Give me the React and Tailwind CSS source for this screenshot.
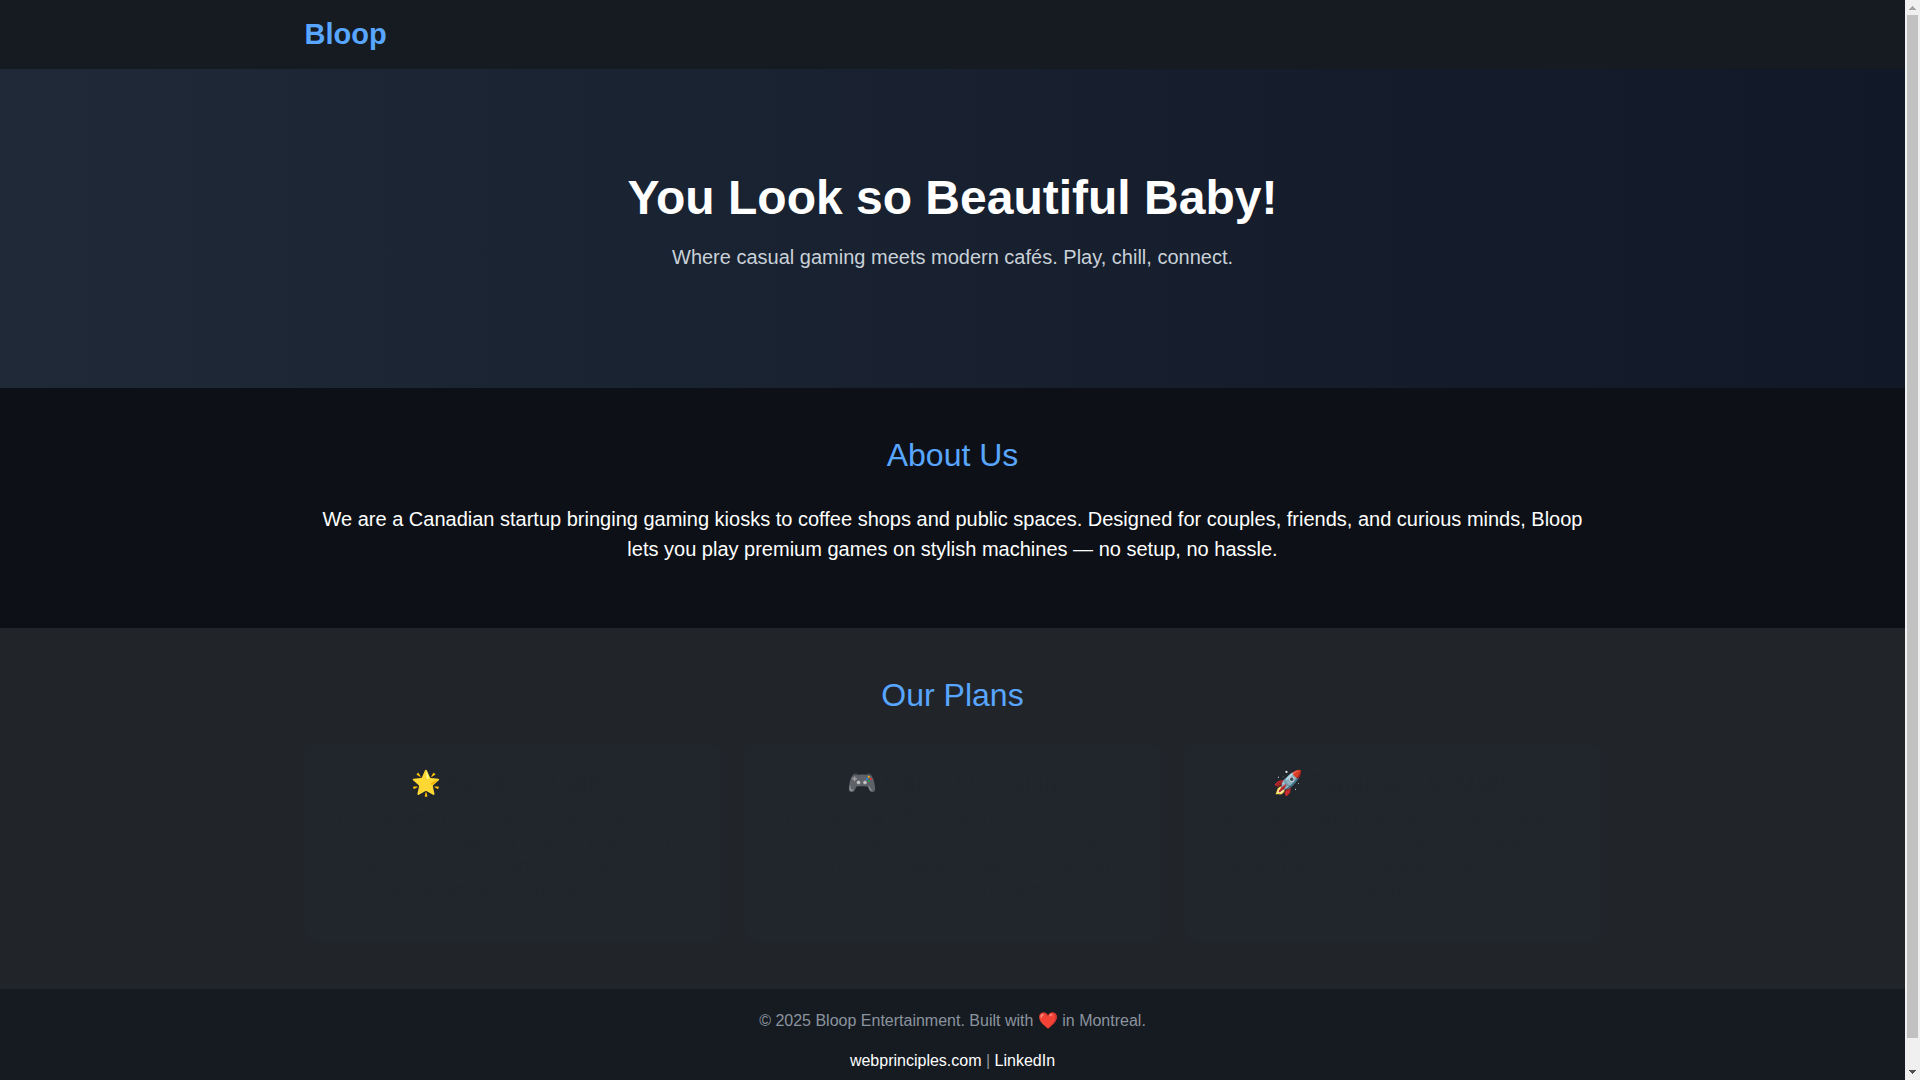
const plans = [
  {
    title: '🌟 Kiosks in Cafés',
    body: "We're partnering with local cafés across Montreal to place premium gaming kiosks — powered by PlayStation, Nintendo, and PC — that you can activate with just a tap of your card.",
  },
  {
    title: '🎮 Game Licensing',
    body: (
      <>
        We're working with indie and AAA developers to license hit titles like <em>Overcooked</em>,{' '}
        <em>Tricky Towers</em>, and more. Expect games designed for two-player fun and short-session
        excitement.
      </>
    ),
  },
  {
    title: '🚀 Expansion to Malls',
    body: 'Next stop: shopping malls and college campuses. Our modular setups and capture-card powered display system bring visibility, fun, and revenue to any space.',
  },
];

const Container = ({ className = '', children }) => (
  <div className={`mx-auto w-full max-w-[1320px] px-3 ${className}`}>{children}</div>
);

const SectionTitle = ({ children }) => (
  <h2 className="mb-[30px] text-[32px] leading-[38px] font-normal text-[#58a6ff]">{children}</h2>
);

const PlanCard = ({ title, body }) => (
  <div className="rounded-xl bg-[#21262d] p-6 text-[#212529]">
    <h4 className="mb-2 text-2xl leading-[29px] font-medium">{title}</h4>
    <p className="mb-4">{body}</p>
  </div>
);

const Scrollbar = () => (
  <div className="flex w-[15px] shrink-0 flex-col bg-[#f0f0f0] px-[2px]" aria-hidden="true">
    <svg className="h-[15px] w-[11px] shrink-0" viewBox="0 0 11 15" shapeRendering="crispEdges">
      <path d="M5 6h1v1h1v1h1v1h1v1H2V9h1V8h1V7h1z" fill="#a3a3a3" />
    </svg>
    <div className="flex-1 bg-[#c1c1c1]" />
    <div className="h-[27px] shrink-0" />
    <svg className="h-[15px] w-[11px] shrink-0" viewBox="0 0 11 15" shapeRendering="crispEdges">
      <path d="M2 5h7v1H8v1H7v1H6v1H5V8H4V7H3V6H2z" fill="#505050" />
    </svg>
  </div>
);

export default function App() {
  return (
    <div className="flex h-screen overflow-hidden bg-[#0d1117] font-['Liberation_Sans',Arial,sans-serif] text-base text-white">
      <div className="min-w-0 flex-1 overflow-hidden">
        <header className="bg-[#161b22] py-3">
          <Container>
            <h1 className="text-[29px] leading-[45px] font-bold text-[#58a6ff]">Bloop</h1>
          </Container>
        </header>

        <section className="bg-linear-to-r/srgb from-[#1f2937] to-[#111827] py-[100px] text-center">
          <h1 className="mb-4 text-5xl leading-[57px] font-bold">You Look so Beautiful Baby!</h1>
          <p className="mb-4 text-xl leading-[30px] text-[#c9d1d9]">
            Where casual gaming meets modern cafés. Play, chill, connect.
          </p>
        </section>

        <section className="py-12 text-center">
          <Container>
            <SectionTitle>About Us</SectionTitle>
            <p className="mb-4 text-xl leading-[30px]">
              We are a Canadian startup bringing gaming kiosks to coffee shops and public spaces.
              Designed for couples, friends, and curious minds, Bloop lets you play premium games on
              stylish machines — no setup, no hassle.
            </p>
          </Container>
        </section>

        <section className="bg-[#212529] py-12 text-center">
          <Container>
            <SectionTitle>Our Plans</SectionTitle>
            <div className="grid grid-cols-1 gap-6 md:grid-cols-3">
              {plans.map((plan) => (
                <PlanCard key={plan.title} {...plan} />
              ))}
            </div>
          </Container>
        </section>

        <footer className="bg-[#161b22] py-5 text-center text-[#8b949e]">
          <p className="mb-4">© 2025 Bloop Entertainment. Built with ❤️ in Montreal.</p>
          <p className="mb-4">
            <a href="#webprinciples" className="text-white">webprinciples.com</a> |{' '}
            <a href="#linkedin" className="text-white">LinkedIn</a>
          </p>
        </footer>
      </div>
      <Scrollbar />
    </div>
  );
}
